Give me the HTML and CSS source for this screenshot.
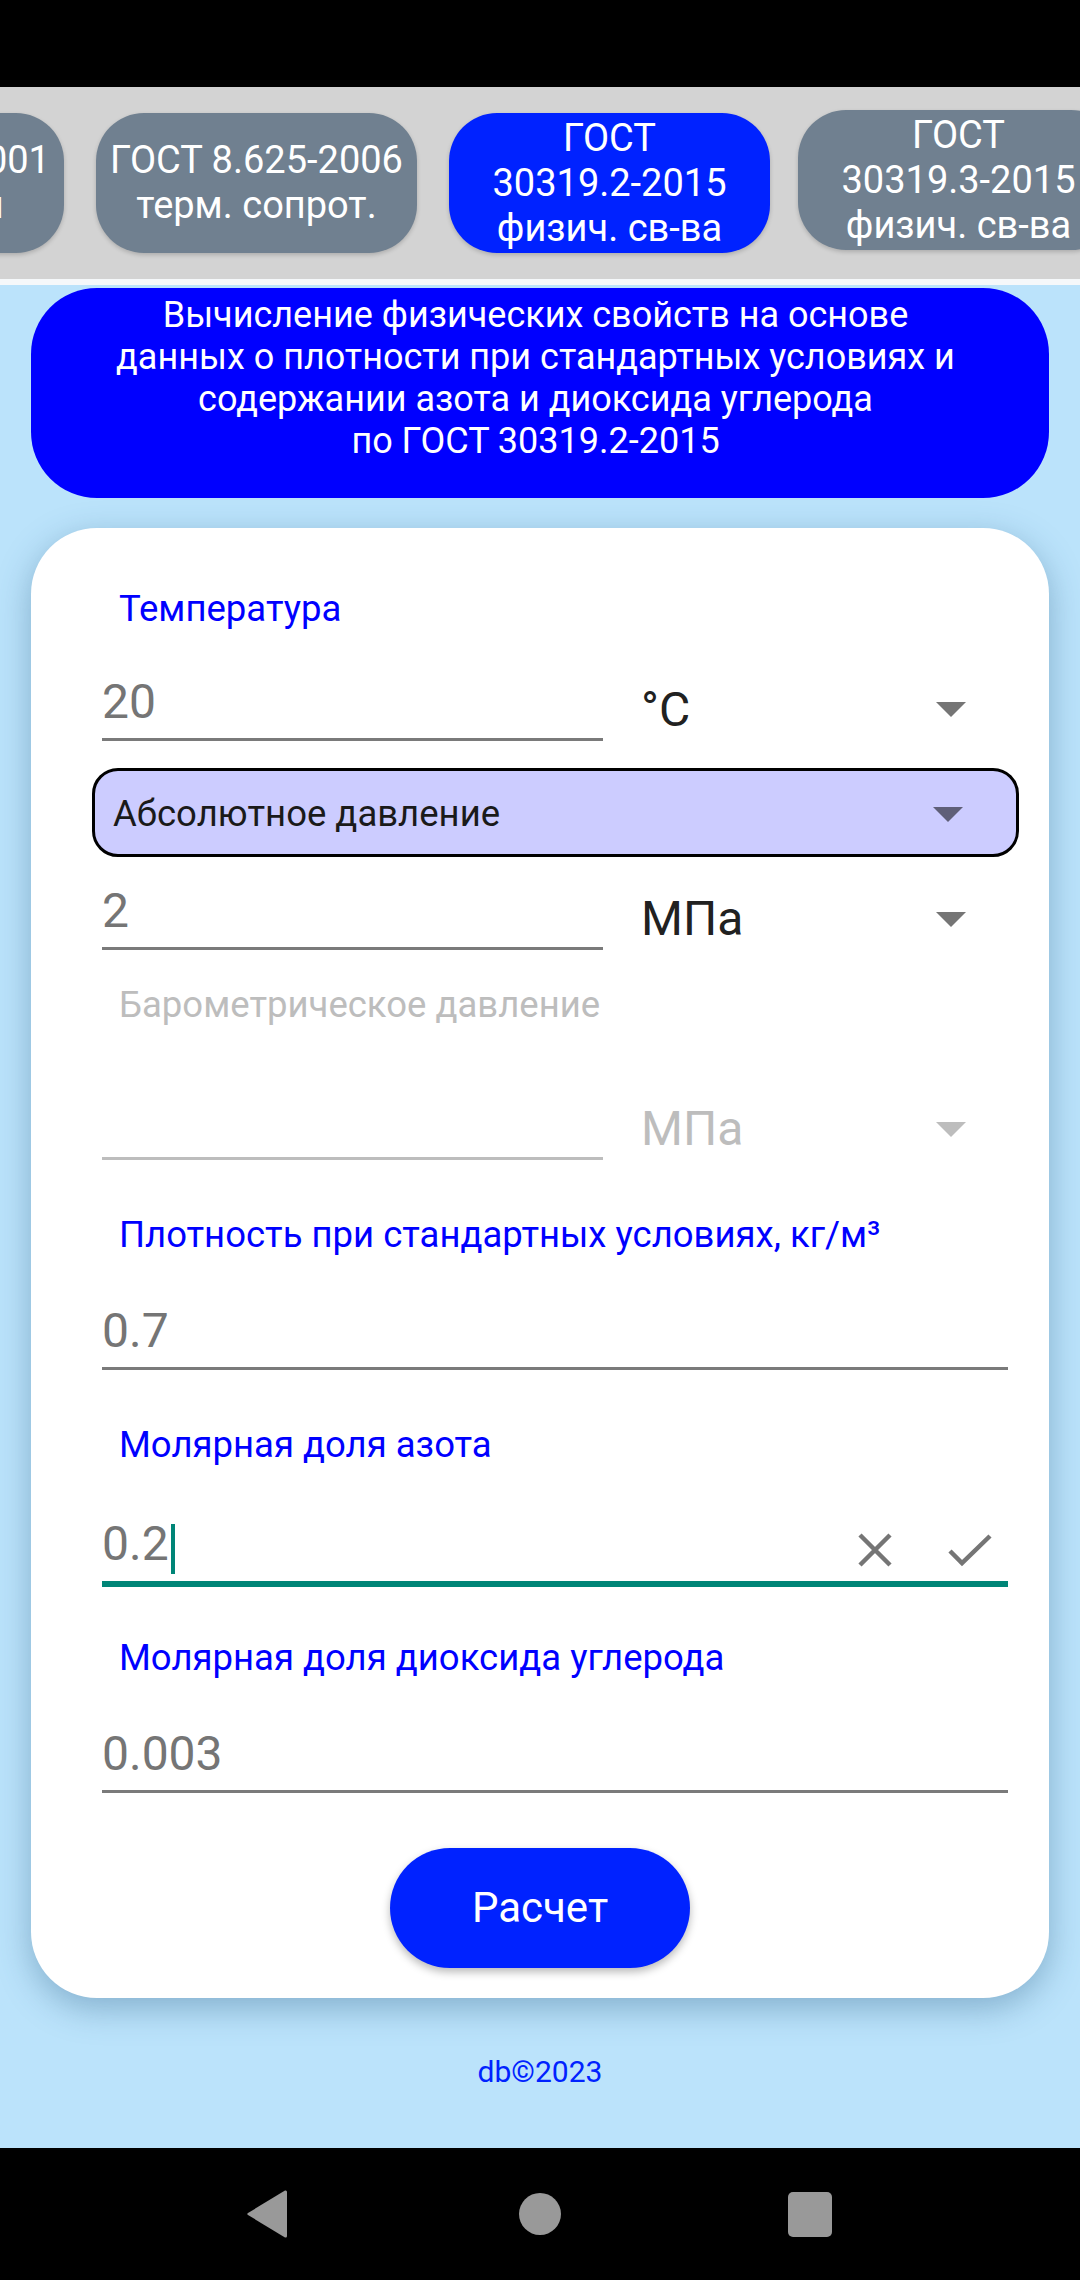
FILE: index.html
```html
<!DOCTYPE html>
<html lang="ru">
<head>
<meta charset="utf-8">
<title>ГОСТ 30319.2-2015</title>
<link rel="stylesheet" href="styles.css">
</head>
<body>
<div class="status-bar"></div>
<div class="tabs-bar">
  <div class="tabs">
    <div class="tab tab-first">ГОСТ 8.585-2001<br>термопары</div>
    <div class="tab">ГОСТ 8.625-2006<br>терм. сопрот.</div>
    <div class="tab tab-active">ГОСТ<br>30319.2-2015<br>физич. св-ва</div>
    <div class="tab tab-last">ГОСТ<br>30319.3-2015<br>физич. св-ва</div>
  </div>
</div>
<div class="divider"></div>
<div class="main">
  <div class="header">Вычисление физических свойств на основе<br>данных о плотности при стандартных условиях и<br>содержании азота и диоксида углерода<br>по ГОСТ 30319.2-2015</div>
  <div class="card">
    <div class="label">Температура</div>
    <div class="row row-temp">
      <div class="field field-half"><span class="value">20</span></div>
      <div class="unit"><span class="unit-text">°C</span><span class="arrow"></span></div>
    </div>
    <div class="select">
      <span class="select-text">Абсолютное давление</span>
      <span class="arrow arrow-dark"></span>
    </div>
    <div class="row row-press">
      <div class="field field-half"><span class="value">2</span></div>
      <div class="unit"><span class="unit-text">МПа</span><span class="arrow"></span></div>
    </div>
    <div class="label label-disabled label-baro">Барометрическое давление</div>
    <div class="row row-baro">
      <div class="field field-half field-disabled"><span class="value"></span></div>
      <div class="unit unit-disabled"><span class="unit-text">МПа</span><span class="arrow"></span></div>
    </div>
    <div class="label label-after-row">Плотность при стандартных условиях, кг/м³</div>
    <div class="field field-full field-gap"><span class="value">0.7</span></div>
    <div class="label label-after-row">Молярная доля азота</div>
    <div class="field field-full field-focus">
      <span class="value">0.2</span><span class="cursor"></span>
      <span class="spacer"></span>
      <svg class="icon-x" width="34" height="34" viewBox="0 0 34 34"><path d="M2 2 L32 32 M32 2 L2 32" stroke="#757575" stroke-width="4.5" fill="none"/></svg>
      <svg class="icon-check" width="44" height="34" viewBox="0 0 44 34"><path d="M2 18 L14 30 L42 3" stroke="#757575" stroke-width="4.5" fill="none"/></svg>
    </div>
    <div class="label label-after-focus">Молярная доля диоксида углерода</div>
    <div class="field field-full field-gap"><span class="value">0.003</span></div>
    <div class="button-wrap"><div class="button">Расчет</div></div>
  </div>
  <div class="footer">db©2023</div>
</div>
<div class="nav-bar">
  <div class="nav-slot nav-back">
    <svg width="44" height="50" viewBox="0 0 44 50"><path d="M3 24 L40 1.5 Q42 1 42 3 L42 47 Q42 49 40 48.5 L3 26 Q1.5 25 3 24 Z" fill="#999999"/></svg>
  </div>
  <div class="nav-slot"><span class="nav-circle"></span></div>
  <div class="nav-slot"><span class="nav-square"></span></div>
</div>
</body>
</html>
```
FILE: styles.css
```css
* { box-sizing: border-box; }

html, body {
  margin: 0;
  padding: 0;
}

body {
  width: 1080px;
  height: 2280px;
  overflow: hidden;
  font-family: Roboto, "Noto Sans", "Liberation Sans", sans-serif;
  background: #bbe3fb;
}

.status-bar {
  height: 87px;
  background: #000;
}

.tabs-bar {
  height: 192px;
  background: #d3d3d3;
  overflow: hidden;
  display: flex;
  align-items: center;
}

.tabs {
  display: flex;
  gap: 32px;
  margin-left: -257px;
}

.tab {
  flex: 0 0 321px;
  height: 140px;
  border-radius: 48px;
  background: #708090;
  color: #fff;
  font-size: 38px;
  line-height: 45px;
  text-align: center;
  display: flex;
  align-items: center;
  justify-content: center;
  overflow: hidden;
  box-shadow: 0 2px 4px rgba(0, 0, 0, 0.18);
}

.tab-active {
  background: #0022ff;
}

.tab-last {
  margin-top: -3px;
  margin-left: -4px;
}

.divider {
  height: 6px;
  background: #f5f8fa;
}

.main {
  height: 1863px;
  padding: 3px 31px 0;
  display: flex;
  flex-direction: column;
}

.header {
  height: 210px;
  border-radius: 66px;
  background: #0000ff;
  color: #fff;
  font-size: 36px;
  line-height: 42px;
  text-align: center;
  padding: 6px 9px 0 0;
}

.card {
  margin-top: 30px;
  background: #fff;
  border-radius: 66px;
  padding: 60px 41px 30px 71px;
  display: flex;
  flex-direction: column;
  box-shadow: 0 10px 34px rgba(40, 90, 130, 0.38);
}

.label {
  font-size: 36.5px;
  line-height: 42px;
  color: #0000ff;
  padding-left: 17px;
  white-space: nowrap;
}

.label-disabled {
  color: #bdbdbd;
}

.label-baro {
  margin-top: 34px;
}

.label-after-row {
  margin-top: 54px;
}

.label-after-focus {
  margin-top: 50px;
}

.row {
  display: flex;
  align-items: flex-start;
}

.row-temp { margin-top: 44px; }
.row-press { margin-top: 26px; }
.row-baro { margin-top: 67px; }

.field {
  display: flex;
  align-items: flex-start;
  font-size: 48px;
  line-height: 56px;
  height: 67px;
  padding-bottom: 8px;
  border-bottom: 3px solid #7a7a7a;
  color: #757575;
}

.field-half {
  width: 501px;
}

.field-full {
  width: 100%;
}

.field-disabled {
  border-bottom-color: #bdbdbd;
}

.field-gap {
  margin-top: 47px;
}

.field-focus {
  margin-top: 50px;
  height: 71px;
  padding-bottom: 9px;
  border-bottom: 6px solid #008577;
}

.value {
  display: block;
  height: 56px;
}

.cursor {
  display: block;
  width: 4px;
  height: 50px;
  margin-top: 8px;
  margin-left: 2px;
  background: #008577;
}

.spacer {
  flex: 1;
}

.icon-x {
  display: block;
  margin-top: 17px;
}

.icon-check {
  display: block;
  margin-top: 17px;
  margin-left: 56px;
  margin-right: 16px;
}

.unit {
  flex: 1;
  display: flex;
  justify-content: space-between;
  align-items: flex-start;
  margin-left: 38px;
  padding-top: 8px;
  font-size: 48px;
  line-height: 56px;
  color: #212121;
}

.unit-disabled {
  color: #bdbdbd;
}

.arrow {
  display: block;
  width: 0;
  height: 0;
  border-left: 15px solid transparent;
  border-right: 15px solid transparent;
  border-top: 15px solid #757575;
  margin-top: 20px;
  margin-right: 42px;
}

.row-press .arrow,
.row-baro .arrow {
  margin-top: 21px;
}

.unit-disabled .arrow {
  border-top-color: #bdbdbd;
}

.select {
  margin: 27px -11px 0 -10px;
  height: 89px;
  border: 3px solid #000;
  border-radius: 26px;
  background: #ccccff;
  display: flex;
  align-items: center;
  justify-content: space-between;
  padding: 0 53px 0 18px;
}

.select-text {
  font-size: 36.5px;
  line-height: 40px;
  color: #1a1a1a;
  padding-top: 3px;
}

.arrow-dark {
  border-top-color: #5f5f78;
  margin: 3px 0 0 0;
}

.button-wrap {
  margin-top: 55px;
  display: flex;
  justify-content: center;
  margin-left: -30px;
}

.button {
  width: 300px;
  height: 120px;
  border-radius: 60px;
  background: #0022ff;
  color: #fff;
  font-size: 42px;
  line-height: 120px;
  text-align: center;
  box-shadow: 0 4px 8px rgba(0, 0, 0, 0.28);
}

.footer {
  margin-top: 57px;
  text-align: center;
  font-size: 30px;
  line-height: 34px;
  color: #0022ff;
}

.nav-bar {
  height: 132px;
  background: #000;
  display: flex;
  justify-content: center;
  align-items: center;
  gap: 210px;
}

.nav-slot {
  width: 60px;
  height: 60px;
  display: flex;
  align-items: center;
  justify-content: center;
}

.nav-back svg {
  margin-left: -6px;
}

.nav-circle {
  display: block;
  width: 42px;
  height: 42px;
  border-radius: 50%;
  background: #999999;
}

.nav-square {
  display: block;
  width: 44px;
  height: 45px;
  border-radius: 5px;
  background: #999999;
}
```
